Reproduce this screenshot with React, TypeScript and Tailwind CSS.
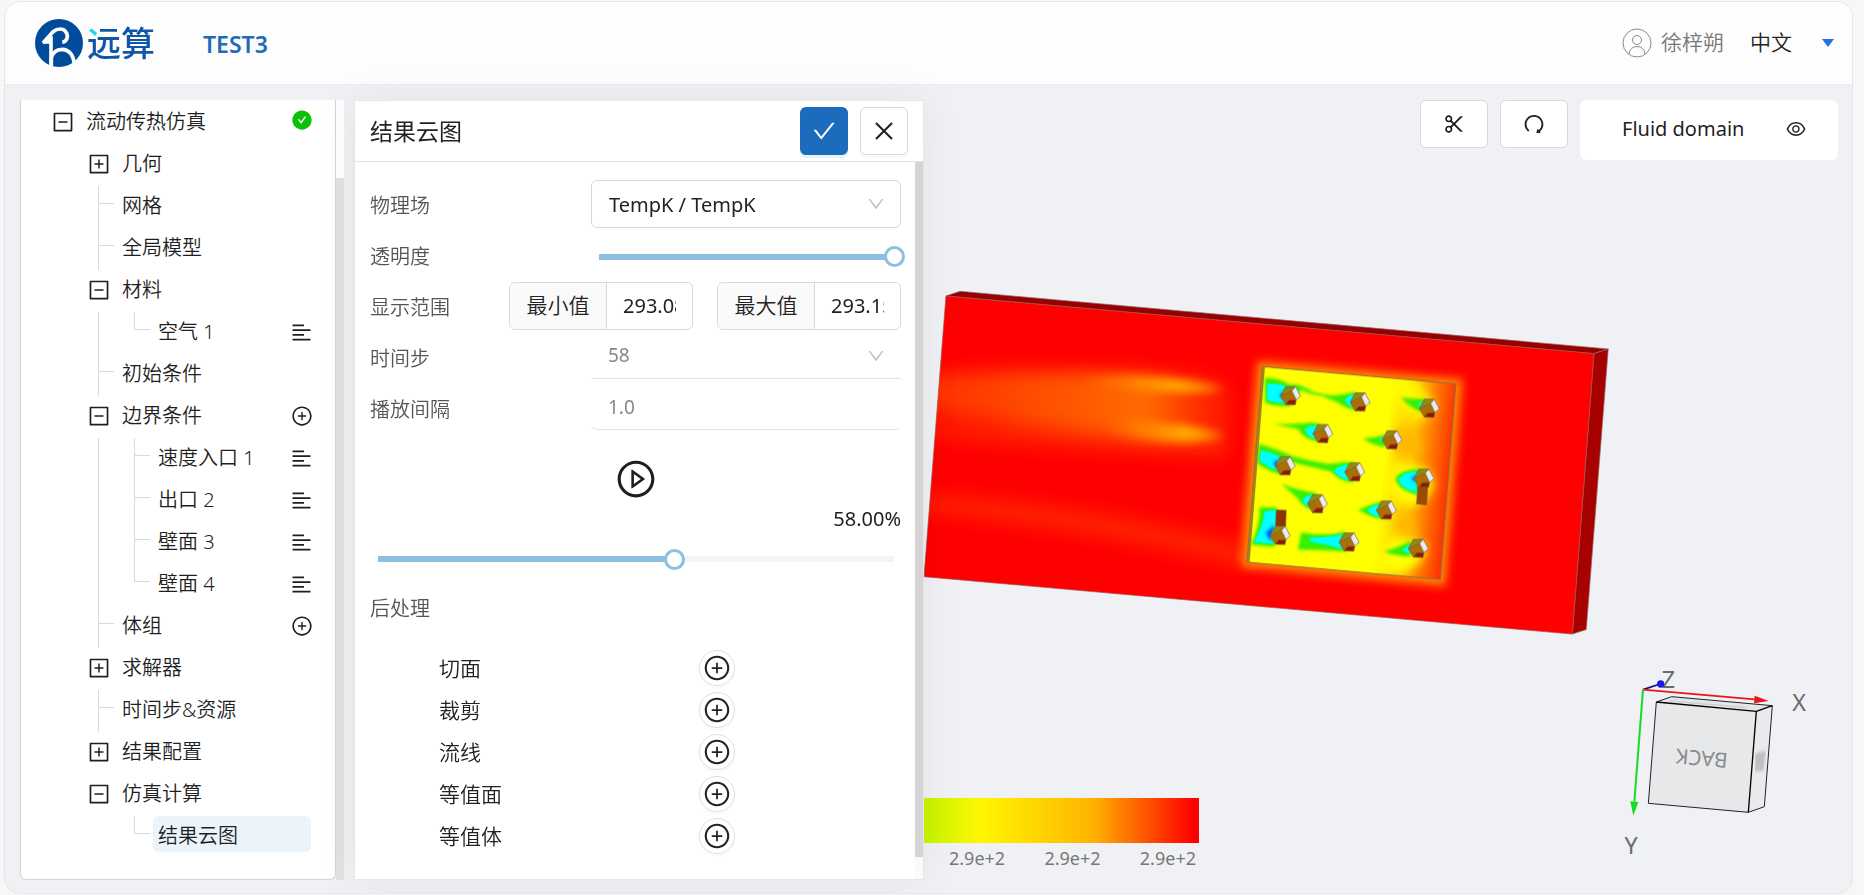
import { useState } from "react";
import type { CSSProperties } from "react";
import {
  AiFillCheckCircle,
  AiOutlineAlignLeft,
  AiOutlineCheck,
  AiOutlineClose,
  AiOutlineDown,
  AiOutlineEye,
  AiOutlineMinusSquare,
  AiOutlinePlayCircle,
  AiOutlinePlusCircle,
  AiOutlinePlusSquare,
  AiOutlineRedo,
  AiOutlineScissor,
} from "react-icons/ai";

interface TreeRow {
  label: string;
  level: 1 | 2 | 3;
  toggle?: "open" | "closed";
  action?: "done" | "menu" | "add";
  last?: boolean;
  selected?: boolean;
}

const treeRows: TreeRow[] = [
  { label: "流动传热仿真", level: 1, toggle: "open", action: "done" },
  { label: "几何", level: 2, toggle: "closed" },
  { label: "网格", level: 2 },
  { label: "全局模型", level: 2 },
  { label: "材料", level: 2, toggle: "open" },
  { label: "空气 1", level: 3, last: true, action: "menu" },
  { label: "初始条件", level: 2 },
  { label: "边界条件", level: 2, toggle: "open", action: "add" },
  { label: "速度入口 1", level: 3, action: "menu" },
  { label: "出口 2", level: 3, action: "menu" },
  { label: "壁面 3", level: 3, action: "menu" },
  { label: "壁面 4", level: 3, last: true, action: "menu" },
  { label: "体组", level: 2, action: "add" },
  { label: "求解器", level: 2, toggle: "closed" },
  { label: "时间步&资源", level: 2 },
  { label: "结果配置", level: 2, toggle: "closed" },
  { label: "仿真计算", level: 2, toggle: "open" },
  { label: "结果云图", level: 3, last: true, selected: true },
];

const postItems = ["切面", "裁剪", "流线", "等值面", "等值体"];

const Logo = () => (
  <a href="#" className="flex items-center gap-1">
    <svg width="48" height="48" viewBox="0 0 144 144" aria-hidden="true">
      <circle cx="72" cy="72" r="72" fill="#004b9b" />
      <path
        d="M24 72 L54 38 Q70 26 86 32 Q100 42 96 58 Q92 68 82 70"
        fill="none"
        stroke="#fff"
        strokeWidth="11"
        strokeLinejoin="round"
      />
      <path d="M48 52 L48 140" fill="none" stroke="#fff" strokeWidth="11" />
      <path d="M22 74 L46 50 L50 74 Z" fill="#fff" />
      <path
        d="M49 140 V118 Q54 92 82 91 Q112 92 118 134"
        fill="none"
        stroke="#fff"
        strokeWidth="11"
      />
    </svg>
    <span className="bg-[radial-gradient(circle_at_6px_8px,#19d3f5_6px,#0f56a5_7px)] bg-clip-text text-[34px] leading-[44px] font-medium text-transparent">
      远算
    </span>
  </a>
);

const Header = () => (
  <header className="flex h-[83px] items-center justify-between border-b border-[#ececee] bg-[#fdfdfd] pr-[17px] pl-[30px]">
    <div className="flex items-center gap-12">
      <Logo />
      <h1 className="pt-0.5 text-[23px] font-semibold text-[#1e6bb8]">TEST3</h1>
    </div>
    <div className="flex items-center gap-[26px]">
      <button className="flex items-center gap-[9px] text-[21px] font-[350] text-[#777]">
        <svg width="30" height="30" viewBox="0 0 30 30" fill="none" stroke="#8a8a8a">
          <circle cx="15" cy="15" r="14" />
          <circle cx="15" cy="12" r="4.5" />
          <path d="M7 26 Q8 18.500 15 18.500 Q22 18.500 23 26" />
        </svg>
        徐梓朔
      </button>
      <div className="relative">
        <select
          aria-label="语言"
          className="w-[85px] appearance-none bg-transparent text-[21px] font-[350] text-[#222]"
        >
          <option>中文</option>
        </select>
        <svg
          className="pointer-events-none absolute top-3 right-0"
          width="14"
          height="8"
          viewBox="0 0 14 8"
        >
          <path d="M1 0 H13 L7 8 Z" fill="#2272e2" />
        </svg>
      </div>
    </div>
  </header>
);

const TreeAction = ({ action }: { action: TreeRow["action"] }) => {
  if (action === "done") return <AiFillCheckCircle className="size-[22px] text-[#0ac10a]" />;
  if (action === "menu")
    return (
      <button aria-label="更多" className="pt-1">
        <AiOutlineAlignLeft className="size-[23px]" />
      </button>
    );
  if (action === "add")
    return (
      <button aria-label="添加" className="pt-1">
        <AiOutlinePlusCircle className="size-[22px]" />
      </button>
    );
  return null;
};

// 叶子节点前的连接线
const Guide = ({ last }: { last?: boolean }) => (
  <span className="h-full w-[19px]">
    <span className="block h-[18px] w-4 border-b border-l border-[#d9d9d9]" />
    {!last && <span className="block h-6 border-l border-[#d9d9d9]" />}
  </span>
);

const TreeItem = ({ row }: { row: TreeRow }) => (
  <li className="flex h-[42px] items-start">
    {row.toggle ? (
      <>
        {row.level === 2 && <span className="w-9" />}
        <button
          aria-label={row.toggle === "open" ? "收起" : "展开"}
          className="flex h-[39px] w-[30px] items-center"
        >
          {row.toggle === "open" ? (
            <AiOutlineMinusSquare className="size-6" />
          ) : (
            <AiOutlinePlusSquare className="size-6" />
          )}
        </button>
      </>
    ) : (
      <>
        <span className="w-[47px]" />
        {row.level === 3 && (
          <span
            className={
              row.selected ? "h-full w-9" : "h-full w-9 border-l border-[#d9d9d9]"
            }
          />
        )}
        <Guide last={row.last} />
      </>
    )}
    <span
      className={
        row.selected
          ? "mr-0.5 flex h-9 flex-1 items-center rounded-md bg-[#ebf4fb] pt-[3px] pl-[5px]"
          : "flex h-9 flex-1 items-center pt-[3px] pl-[5px]"
      }
    >
      {row.label}
    </span>
    <span className="flex h-9 items-center">
      <TreeAction action={row.action} />
    </span>
  </li>
);

const TreePanel = () => (
  <nav aria-label="仿真树" className="flex">
    <div className="w-[316px] rounded-b-md border border-t-0 border-[#d4d4d4] bg-white pt-[2px]">
      <ul className="pr-[22px] pl-[30px] text-[20px] font-[350] text-[#1f1f1f]">
        {treeRows.map((row) => (
          <TreeItem key={row.label} row={row} />
        ))}
      </ul>
    </div>
    <div className="w-2 bg-white pt-[78px]">
      <div className="h-full bg-[#e2e2e2]" />
    </div>
  </nav>
);

interface SliderProps {
  id: string;
  label?: string;
  min: number;
  max: number;
  value: number;
  onChange: (value: number) => void;
}

const Slider = ({ id, label, min, max, value, onChange }: SliderProps) => (
  <input
    id={id}
    type="range"
    aria-label={label}
    min={min}
    max={max}
    value={value}
    onChange={(e) => onChange(Number(e.target.value))}
    style={{ "--fill": `${((value - min) / (max - min)) * 100}%` } as CSSProperties}
    className="h-[21px] w-full appearance-none bg-[linear-gradient(to_right,#8bc0e0_var(--fill),#f4f4f4_var(--fill))] bg-[length:calc(100%-21px)_6px] bg-center bg-no-repeat [&::-webkit-slider-thumb]:size-[21px] [&::-webkit-slider-thumb]:appearance-none [&::-webkit-slider-thumb]:rounded-full [&::-webkit-slider-thumb]:border-3 [&::-webkit-slider-thumb]:border-[#8bc0e0] [&::-webkit-slider-thumb]:bg-white"
  />
);

const RangeInput = ({ id, label, value }: { id: string; label: string; value: string }) => (
  <div className="flex h-12 w-[184px] overflow-hidden rounded-md border border-[#d9d9d9] text-[21px] text-[#222]">
    <label
      htmlFor={id}
      className="flex w-[97px] shrink-0 items-center justify-center border-r border-[#d9d9d9] bg-[#fafafa]"
    >
      {label}
    </label>
    <div className="flex min-w-0 flex-1 px-4">
      <input
        id={id}
        defaultValue={value}
        className="w-full min-w-0 text-[20px] font-normal outline-none"
      />
    </div>
  </div>
);

const ResultPanel = () => {
  const [opacity, setOpacity] = useState(100);
  const [step, setStep] = useState(58);

  return (
    <section className="z-10 flex w-[570px] flex-col border border-[#e6e6e8] bg-white shadow-[0_0_40px_rgba(0,0,0,0.06)]">
      <div className="flex h-[61px] items-center justify-between border-b border-[#e3e3e3] px-[15px]">
        <h2 className="text-[23px] text-[#222]">结果云图</h2>
        <div className="flex gap-3">
          <button
            aria-label="确定"
            className="flex size-12 items-center justify-center rounded-md bg-[#1d6bbc] text-white shadow-[0_3px_0_#e6f3fb]"
          >
            <AiOutlineCheck className="size-[26px]" />
          </button>
          <button
            aria-label="关闭"
            className="flex size-12 items-center justify-center rounded-md border border-[#d9d9d9] text-[#222] shadow-[0_3px_0_#fafafa]"
          >
            <AiOutlineClose className="size-[26px]" />
          </button>
        </div>
      </div>
      <div className="flex flex-1">
        <div className="flex-1 pt-[18px] pr-[14px] pl-[15px] text-[20px] font-[350] text-[#555]">
          <div className="flex h-[51px] items-start justify-between">
            <label htmlFor="field" className="leading-[51px]">
              物理场
            </label>
            <div className="relative">
              <select
                id="field"
                className="h-12 w-[310px] appearance-none rounded-md border border-[#d9d9d9] px-[17px] pt-0.5 font-normal text-[#222]"
              >
                <option>TempK / TempK</option>
              </select>
              <AiOutlineDown className="pointer-events-none absolute top-[14px] right-[15px] size-5 text-[#bfbfbf]" />
            </div>
          </div>
          <div className="flex h-[51px] items-start justify-between">
            <label htmlFor="opacity" className="leading-[51px]">
              透明度
            </label>
            <div className="-mr-1 flex h-[51px] w-[317px] items-center">
              <Slider id="opacity" min={0} max={100} value={opacity} onChange={setOpacity} />
            </div>
          </div>
          <div className="flex h-[51px] items-start justify-between">
            <span className="leading-[51px]">显示范围</span>
            <div className="flex gap-6">
              <RangeInput id="range-min" label="最小值" value="293.086" />
              <RangeInput id="range-max" label="最大值" value="293.15" />
            </div>
          </div>
          <div className="flex h-[51px] items-start justify-between">
            <label htmlFor="time-step" className="leading-[51px]">
              时间步
            </label>
            <div className="relative">
              <select
                id="time-step"
                className="h-[46px] w-[310px] appearance-none border-b border-[#e3e3e3] px-[17px] text-[19px] font-normal text-[#888]"
              >
                <option>58</option>
              </select>
              <AiOutlineDown className="pointer-events-none absolute top-[13px] right-[15px] size-5 text-[#bfbfbf]" />
            </div>
          </div>
          <div className="flex h-[51px] items-start justify-between">
            <label htmlFor="interval" className="leading-[51px]">
              播放间隔
            </label>
            <input
              id="interval"
              defaultValue="1.0"
              className="h-[46px] w-[310px] rounded-md border-b border-[#e3e3e3] px-[17px] text-[19px] font-normal text-[#888] outline-none"
            />
          </div>
          <div className="flex justify-center pt-[23px]">
            <button aria-label="播放" className="text-[#1f1f1f]">
              <AiOutlinePlayCircle className="size-[42px]" />
            </button>
          </div>
          <p className="text-right leading-[38px] font-normal text-[#222]">{step.toFixed(2)}%</p>
          <div className="-mx-[3px] flex h-[42px] items-center">
            <Slider id="progress" label="播放进度" min={1} max={100} value={step} onChange={setStep} />
          </div>
          <h3 className="mt-[9px] leading-[40px]">后处理</h3>
          <ul className="mt-[21px] pl-[69px] text-[21px] text-[#222]">
            {postItems.map((item) => (
              <li key={item} className="flex h-[42px] items-start">
                <span className="w-[260px] leading-9">{item}</span>
                <button
                  aria-label={`添加${item}`}
                  className="flex size-9 items-center justify-center rounded-full border border-[#dedede] shadow-[0_3px_0_#fafafa]"
                >
                  <AiOutlinePlusCircle className="size-7" />
                </button>
              </li>
            ))}
          </ul>
        </div>
        <div className="w-2 bg-[#fafafa] pb-[22px]">
          <div className="h-full bg-[#d5d5d5]" />
        </div>
      </div>
    </section>
  );
};

const Toolbar = () => (
  <div className="flex items-start justify-end gap-3 pr-[14px] text-[#1f1f1f]">
    <button
      aria-label="剪切"
      className="flex h-12 w-[68px] items-center justify-center rounded-md border border-[#d9d9d9] bg-white"
    >
      <AiOutlineScissor className="size-6" />
    </button>
    <button
      aria-label="重置视角"
      className="flex h-12 w-[68px] items-center justify-center rounded-md border border-[#d9d9d9] bg-white"
    >
      <AiOutlineRedo className="size-6" />
    </button>
    <div className="flex h-[60px] w-[258px] items-center justify-between rounded-md bg-white pr-[31px] pb-[3px] pl-[42px]">
      <span className="text-[20px]">Fluid domain</span>
      <button aria-label="显示或隐藏">
        <AiOutlineEye className="size-[22px]" />
      </button>
    </div>
  </div>
);

const pins = [
  [183, 138],
  [392, 157],
  [600, 176],
  [280, 252],
  [488, 271],
  [167, 349],
  [376, 367],
  [584, 386],
  [264, 463],
  [471, 482],
  [152, 558],
  [359, 578],
  [567, 597],
];

// 低温尾流：绿色外圈 + 青色核心
const wakes = [
  {
    green: "M106 84 Q150 84 180 104 Q210 98 250 126 Q300 138 330 140 Q250 142 215 120 L180 170 Q130 170 106 158 Z",
    cyan: "M112 100 Q140 100 172 108 L155 135 L170 160 Q130 160 112 150 Z",
  },
  {
    green: "M280 140 Q340 136 380 126 L388 182 Q350 178 325 158 Z",
    cyan: "M346 150 Q355 134 376 134 L368 156 L376 172 Q352 170 346 150 Z",
  },
  { green: "M515 143 Q560 148 585 146 L585 188 Q550 182 515 143 Z", cyan: "M566 160 L580 156 L574 180 Z" },
  {
    green: "M130 222 Q200 224 240 218 L272 222 L268 276 Q225 272 205 238 Z",
    cyan: "M226 240 Q236 224 268 228 L256 250 L262 268 Q234 266 226 240 Z",
  },
  { green: "M400 267 Q440 262 474 254 L466 292 Q440 290 400 267 Z", cyan: "M450 266 L464 262 L460 280 Z" },
  {
    green: "M88 282 Q150 300 185 318 Q240 334 300 344 Q240 358 190 336 L160 374 Q120 368 84 342 Z",
    cyan: "M92 302 Q130 306 158 326 L142 346 L150 366 Q120 358 90 334 Z",
  },
  {
    green: "M220 345 Q300 345 345 337 L376 340 L372 398 Q330 396 306 366 Z",
    cyan: "M312 362 Q330 342 366 346 L346 368 L362 392 Q330 390 312 362 Z",
  },
  {
    green: "M498 385 Q512 360 572 357 L575 440 Q500 420 498 385 Z",
    cyan: "M508 388 Q520 366 566 365 L556 386 L564 428 Q512 418 508 388 Z",
  },
  {
    green: "M155 402 Q210 425 262 430 L254 482 Q215 472 204 446 Z",
    cyan: "M220 452 Q226 432 258 436 L234 460 L244 474 Q222 468 220 452 Z",
  },
  {
    green: "M385 482 Q430 460 465 456 L462 508 Q425 504 400 488 Z",
    cyan: "M414 482 Q430 462 456 466 L442 482 L456 502 Q424 500 414 482 Z",
  },
  {
    green: "M90 472 L142 474 L135 592 L64 586 Q90 530 90 472 Z",
    cyan: "M104 486 L140 480 L138 532 L122 556 L132 584 L72 578 Q100 530 104 486 Z",
  },
  {
    green: "M215 548 Q290 562 345 546 L350 606 Q280 602 205 600 Z",
    cyan: "M240 564 Q290 564 342 554 L330 578 L344 600 Q300 588 242 576 Z",
  },
  { green: "M465 606 Q510 592 545 574 L545 620 Q500 622 465 606 Z", cyan: "M518 602 L542 584 L540 614 Z" },
];

const Pin = ({ x, y }: { x: number; y: number }) => (
  <g transform={`translate(${x} ${y})`} stroke="#7f5f4a" strokeWidth="2" strokeLinejoin="round">
    <path d="M-30 0 L-15 -28 L15 -28 L4 -15 Z" fill="#8f8a10" />
    <path d="M-30 0 L4 -15 L17 12 L-15 26 Z" fill="#ad7000" />
    <path d="M-15 26 L-5 13 L17 12 L14 27 Z" fill="#8c1a00" />
    <path d="M15 -28 L30 1 L17 12 L4 -15 Z" fill="#ebebf5" />
  </g>
);

const Scene = () => (
  <svg className="mt-[125px] w-full" viewBox="924 285 929 355" role="img" aria-label="温度云图">
    <defs>
      <linearGradient id="chip" x1="0" y1="0" x2="1" y2="0.100">
        <stop offset="0" stopColor="#ffff00" />
        <stop offset="0.690" stopColor="#ffff00" />
        <stop offset="0.820" stopColor="#ffc400" />
        <stop offset="0.900" stopColor="#ff8400" />
        <stop offset="0.980" stopColor="#ff4800" />
        <stop offset="1" stopColor="#ff3800" />
      </linearGradient>
      <linearGradient id="wakeFade" gradientUnits="userSpaceOnUse" x1="930" y1="0" x2="1240" y2="0">
        <stop offset="0" stopColor="#ff7a00" stopOpacity="0.400" />
        <stop offset="0.700" stopColor="#ff8000" stopOpacity="0.850" />
        <stop offset="1" stopColor="#ff6000" stopOpacity="0.100" />
      </linearGradient>
      <linearGradient id="hot">
        <stop offset="0" stopColor="#ff9000" stopOpacity="0" />
        <stop offset="0.700" stopColor="#ffb000" />
        <stop offset="1" stopColor="#ffa000" stopOpacity="0.600" />
      </linearGradient>
      <clipPath id="front">
        <path d="M946 296 L1594.700 353.700 L1573 634.500 L924 577 Z" />
      </clipPath>
      <clipPath id="chipClip">
        <path d="M98 50 L680 102 L633 690 L52 638 Z" />
      </clipPath>
      <filter id="blur3" x="-30%" y="-30%" width="160%" height="160%">
        <feGaussianBlur stdDeviation="4" />
      </filter>
      <filter id="blur5" x="-30%" y="-100%" width="160%" height="300%">
        <feGaussianBlur stdDeviation="6 4" />
      </filter>
      <filter id="blur8" x="-30%" y="-60%" width="160%" height="220%">
        <feGaussianBlur stdDeviation="9" />
      </filter>
      <filter id="blur14" x="-40%" y="-40%" width="180%" height="180%">
        <feGaussianBlur stdDeviation="14" />
      </filter>
    </defs>

    <path d="M946 296 L960 291.300 L1609 349 L1594.700 353.700 Z" fill="#960000" stroke="#9a6a6a" strokeWidth="0.700" />
    <path d="M1594.700 353.700 L1609 349 L1587 630 L1573 634.500 Z" fill="#a60000" stroke="#9a6a6a" strokeWidth="0.700" />
    <path d="M946 296 L1594.700 353.700 L1573 634.500 L924 577 Z" fill="#ff0000" stroke="#a05050" strokeWidth="0.700" />

    <g clipPath="url(#front)">
      <g filter="url(#blur8)">
        <path d="M925 374 Q1080 366 1220 380 Q1245 400 1225 450 Q1120 436 925 412 Z" fill="url(#wakeFade)" />
        <path d="M925 424 Q1080 424 1230 446 L1225 456 Q1080 452 925 436 Z" fill="#ff4a00" opacity="0.450" />
        <path d="M925 495 Q1100 505 1252 548 L1248 568 Q1100 530 925 512 Z" fill="#ff5000" opacity="0.450" />
      </g>
      <g filter="url(#blur5)">
        <ellipse cx="1150" cy="384" rx="72" ry="7" fill="url(#hot)" transform="rotate(4 1150 384)" />
        <ellipse cx="1162" cy="432" rx="60" ry="9" fill="url(#hot)" transform="rotate(4 1162 432)" />
      </g>
    </g>

    <g transform="translate(1230 350) scale(0.333)">
      <path
        d="M92 44 L690 96 L640 700 L44 644 Z"
        fill="#ff8a00"
        stroke="#ff8a00"
        strokeWidth="20"
        filter="url(#blur14)"
      />
      <path d="M98 50 L680 102 L633 690 L52 638 Z" fill="url(#chip)" />
      <g clipPath="url(#chipClip)">
        <g filter="url(#blur14)">
          <path d="M520 60 Q600 120 620 180 L560 220 L470 120 Z" fill="#ffff00" opacity="0.800" />
          <path d="M500 350 Q600 330 612 400 Q600 460 540 470 Q490 450 480 400 Z" fill="#ffff00" />
          <path d="M480 570 Q560 560 590 590 Q590 640 520 670 L440 660 Z" fill="#ffff00" />
          <path d="M500 220 Q560 250 580 300 L500 330 Z" fill="#ffb800" />
          <path d="M510 480 Q570 500 560 560 L490 540 Z" fill="#ffb800" />
        </g>
        <g filter="url(#blur3)">
          {wakes.map((wake) => (
            <path key={wake.green} d={wake.green} fill="#38f000" />
          ))}
        </g>
        {wakes.map((wake) => (
          <path key={wake.cyan} d={wake.cyan} fill="#00ffff" stroke="#00ff70" strokeWidth="3" />
        ))}
        <g filter="url(#blur3)" fill="#0050ff">
          <path d="M150 328 L130 340 L148 360 Z" />
          <path d="M565 374 L545 386 L560 398 Z" />
          <path d="M134 526 L108 550 L124 576 Z" />
          <path d="M160 124 L150 136 L162 152 Z" />
        </g>
        <path d="M98 50 L106 51 L60 639 L52 638 Z" fill="#a08a10" />
      </g>
      <path d="M98 50 L680 102 L633 690 L52 638 Z" fill="none" stroke="#8b6b4d" strokeWidth="3" />
      <path d="M566 402 L596 400 L592 466 L562 463 Z" fill="#9c4a00" stroke="#7f5f4a" strokeWidth="2" />
      <path d="M140 481 L170 482 L168 532 L138 532 Z" fill="#8c3500" stroke="#7f5f4a" strokeWidth="2" />
      {pins.map(([x, y]) => (
        <Pin key={`${x}-${y}`} x={x} y={y} />
      ))}
    </g>
  </svg>
);

const Legend = () => (
  <div className="w-[275px] text-[18px] text-[#777]">
    <div className="h-[45px] bg-[linear-gradient(to_right,#c4f500_0%,#fff600_21%,#ffb400_61%,#ff0000_98%)]" />
    <div className="flex justify-between pt-[3px] pr-[3px] pl-[25px] leading-6">
      <span>2.9e+2</span>
      <span>2.9e+2</span>
      <span>2.9e+2</span>
    </div>
  </div>
);

const ViewCube = () => (
  <svg
    className="mr-[38px] w-[194px] font-['Noto_Sans',sans-serif]"
    viewBox="180 40 582 650"
    role="img"
    aria-label="视角方块"
  >
    <defs>
      <filter id="soft">
        <feGaussianBlur stdDeviation="4" />
      </filter>
    </defs>
    <g strokeLinejoin="round">
      <path d="M289 187 L335 171 L637 198 L589 215 Z" fill="#e4e5e7" />
      <path d="M330 184 L560 204" stroke="#cfd0d2" strokeWidth="4" />
      <path d="M289 187 L589 215 L565 518 L265 491 Z" fill="#e7e8ea" />
      <path d="M589 215 L637 198 L613 501 L565 518 Z" fill="#e9eaec" />
      <g stroke="#222" fill="none" strokeWidth="3">
        <path d="M289 187 L335 171 L637 198" />
        <path d="M289 187 L265 491 L565 518 L613 501 L637 198" />
        <path d="M289 187 L589 215 L637 198 M589 215 L565 518" stroke="#000" strokeWidth="4" />
      </g>
    </g>
    <path
      d="M590 340 L588 396 M598 338 L590 396 M606 336 L600 394 M614 334 L606 392"
      stroke="#b4b4b4"
      strokeWidth="6"
      filter="url(#soft)"
    />
    <text
      transform="translate(425 358) rotate(185)"
      textAnchor="middle"
      dominantBaseline="central"
      fontSize="62"
      fill="#8a8b8d"
    >
      BACK
    </text>
    <path d="M249 150 L300 133" stroke="#10107a" strokeWidth="5" />
    <path d="M249 150 L584 179" stroke="#f01414" strokeWidth="5" />
    <path d="M584 168 L626 184 L582 191 Z" fill="#e81818" />
    <path d="M249 150 L223 486" stroke="#14dc28" strokeWidth="6" />
    <path d="M211 485 L235 487 L220 528 Z" fill="#14dc28" />
    <g fontSize="70" fill="#6b6b6b" textAnchor="middle">
      <text x="325" y="146">
        Z
      </text>
      <text x="717" y="213">
        X
      </text>
      <text x="213" y="643">
        Y
      </text>
    </g>
    <circle cx="302" cy="133" r="11" fill="#1818f0" />
  </svg>
);

const App = () => (
  <div className="flex min-h-screen flex-col bg-[#f7f7f7] pt-px pr-[11px] pb-px pl-1 font-['Noto_Sans','Noto_Sans_CJK_SC',sans-serif]">
    <div className="flex flex-1 flex-col overflow-hidden rounded-2xl border border-[#e5e5e7] bg-[#f0f1f5]">
      <Header />
      <main className="flex flex-1 pt-[15px] pl-[15px]">
        <div className="flex gap-[10px] pb-[13px]">
          <TreePanel />
          <ResultPanel />
        </div>
        <div className="flex min-w-0 flex-1 flex-col">
          <Toolbar />
          <Scene />
          <div className="mt-auto flex items-end justify-between pb-[23px]">
            <Legend />
            <ViewCube />
          </div>
        </div>
      </main>
    </div>
  </div>
);

export default App;
